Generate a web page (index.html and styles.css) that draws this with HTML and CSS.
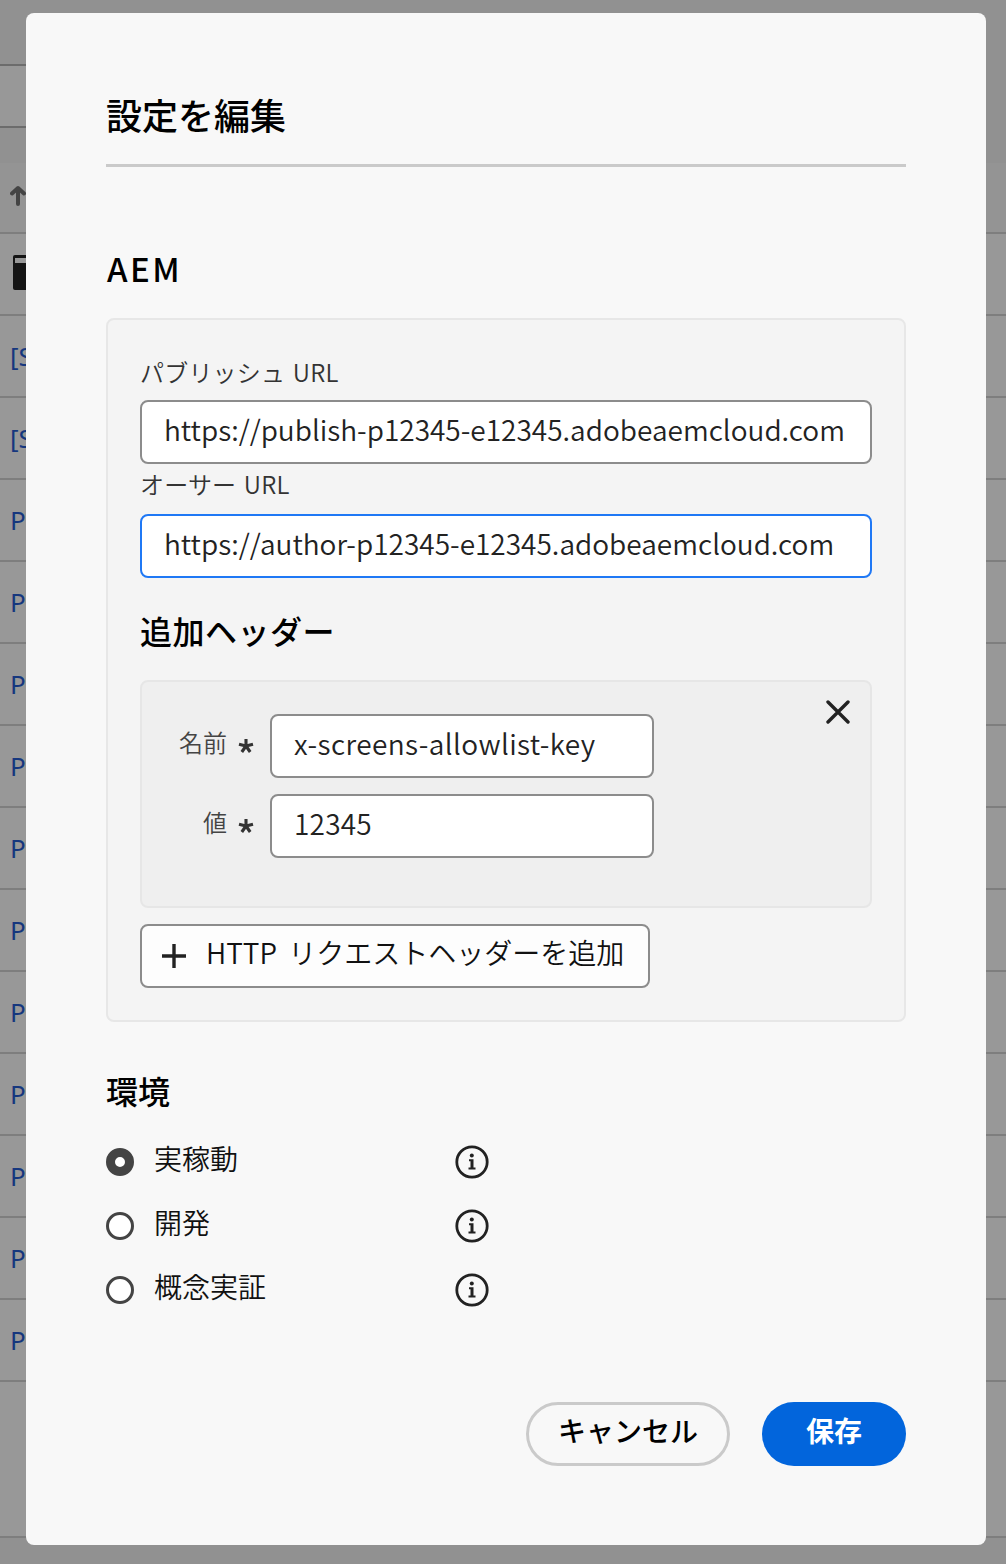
FILE: index.html
```html
<!DOCTYPE html>
<html lang="ja">
<head>
<meta charset="utf-8">
<title>設定を編集</title>
<link rel="stylesheet" href="styles.css">
</head>
<body>
<main class="page">
  <div class="topbar"></div>
  <div class="search"></div>
  <div class="gap"></div>
  <div class="sort">
    <svg width="20" height="22" viewBox="0 0 20 22"><path d="M8 19V4M2 8.500L8 3l6 5.500" fill="none" stroke="#444" stroke-width="4" stroke-linecap="round" stroke-linejoin="round"/></svg>
  </div>
  <div class="row"><span class="thumb"></span></div>
  <div class="row">[S</div>
  <div class="row">[S</div>
  <div class="row">P</div>
  <div class="row">P</div>
  <div class="row">P</div>
  <div class="row">P</div>
  <div class="row">P</div>
  <div class="row">P</div>
  <div class="row">P</div>
  <div class="row">P</div>
  <div class="row">P</div>
  <div class="row">P</div>
  <div class="row">P</div>
  <div class="rest"></div>
</main>
<div class="overlay">
  <form class="dialog">
    <h1 class="title">設定を編集</h1>
    <h2 class="heading heading-aem">AEM</h2>
    <section class="panel">
      <label class="label">パブリッシュ URL</label>
      <div class="input url">https://publish-p12345-e12345.adobeaemcloud.com</div>
      <label class="label label-second">オーサー URL</label>
      <div class="input url focused">https://author-p12345-e12345.adobeaemcloud.com</div>
      <h3 class="heading heading-headers">追加ヘッダー</h3>
      <div class="header-card">
        <div class="fields">
          <div class="field">
            <label class="side-label">名前</label>
            <svg class="star" width="18" height="18" viewBox="0 0 18 18"><path d="M9 9V2M9 9l7-1.800M9 9l4.200 6M9 9l-4.200 6M9 9L2 7.200"/></svg>
            <div class="input">x-screens-allowlist-key</div>
          </div>
          <div class="field">
            <label class="side-label">値</label>
            <svg class="star" width="18" height="18" viewBox="0 0 18 18"><path d="M9 9V2M9 9l7-1.800M9 9l4.200 6M9 9l-4.200 6M9 9L2 7.200"/></svg>
            <div class="input value">12345</div>
          </div>
        </div>
        <svg class="close" width="24" height="24" viewBox="0 0 24 24"><path d="M2 2l20 20M22 2L2 22"/></svg>
      </div>
      <div class="add">
        <svg class="plus" width="24" height="24" viewBox="0 0 24 24"><path d="M12 0v24M0 12h24"/></svg>
        <span>HTTP リクエストヘッダーを追加</span>
      </div>
    </section>
    <h2 class="heading heading-env">環境</h2>
    <div class="option">
      <i class="radio checked"></i><span class="option-name">実稼動</span>
      <svg class="info" width="34" height="34" viewBox="0 0 34 34"><circle cx="17" cy="17" r="15.200"/><path class="stem" d="M14 14.200h4.500v8.300h2v2h-7v-2h2v-6.300H14z"/><circle class="dot" cx="16.800" cy="10.400" r="2"/></svg>
    </div>
    <div class="option">
      <i class="radio"></i><span class="option-name">開発</span>
      <svg class="info" width="34" height="34" viewBox="0 0 34 34"><circle cx="17" cy="17" r="15.200"/><path class="stem" d="M14 14.200h4.500v8.300h2v2h-7v-2h2v-6.300H14z"/><circle class="dot" cx="16.800" cy="10.400" r="2"/></svg>
    </div>
    <div class="option">
      <i class="radio"></i><span class="option-name">概念実証</span>
      <svg class="info" width="34" height="34" viewBox="0 0 34 34"><circle cx="17" cy="17" r="15.200"/><path class="stem" d="M14 14.200h4.500v8.300h2v2h-7v-2h2v-6.300H14z"/><circle class="dot" cx="16.800" cy="10.400" r="2"/></svg>
    </div>
    <div class="actions">
      <div class="button cancel">キャンセル</div>
      <div class="button save">保存</div>
    </div>
  </form>
</div>
</body>
</html>
```
FILE: styles.css
```css
* { box-sizing: border-box; }
html, body { margin: 0; height: 100%; overflow: hidden; }
body { font-family: "Noto Sans CJK JP", sans-serif; font-weight: 350; color: #111; background: #919191; }
.page { height: 1564px; display: flex; flex-direction: column; }
.topbar { height: 64px; background: #919191; }
.search { width: 500px; height: 64px; background: #989898; border: solid #6c6c6c; border-width: 2px 0; }
.gap { height: 35px; background: #919191; }
.sort { height: 71px; padding: 22px 0 0 10px; background: #949494; border-bottom: 2px solid #7e7e7e; }
.row { height: 82px; padding-left: 10px; background: #989898; border-bottom: 2px solid #7e7e7e; color: #16377e; font: 26px/80px "Noto Sans", sans-serif; }
.thumb { display: block; width: 40px; height: 35px; margin-top: 21px; margin-left: 3px; background: linear-gradient(#989898, #989898) 2px 3px / 100% 5px no-repeat #151515; border-radius: 2px; }
.rest { height: 156px; background: #989898; border-bottom: 2px solid #7e7e7e; }
.overlay { position: fixed; inset: 0; padding: 13px 20px 19px 26px; }
.dialog { width: 960px; height: 1532px; padding: 74px 80px 0; background: #f8f8f8; border-radius: 8px; }
.title { margin: 0; height: 80px; border-bottom: 3px solid #cacaca; font-size: 36px; line-height: 54px; font-weight: 500; color: #000; }
.heading { margin: 0; font-size: 32px; line-height: 48px; font-weight: 500; color: #000; }
.heading-aem { margin-top: 77px; padding-left: 1px; font-size: 33px; letter-spacing: 2.4px; }
.panel { height: 704px; margin-top: 26px; padding: 32px 32px 0; border: 2px solid #e7e7e7; border-radius: 8px; background: #f4f4f4; }
.label { display: block; height: 48px; font-size: 24px; line-height: 39px; letter-spacing: .2px; word-spacing: 2px; color: #333; }
.label-second { height: 50px; }
.input { height: 64px; padding-left: 22px; border: 2px solid #8c8c8c; border-radius: 8px; background: #fff; font-size: 28px; line-height: 54px; white-space: nowrap; letter-spacing: .4px; color: #222; }
.url { letter-spacing: 0; }
.value { letter-spacing: .2px; }
.focused { border-color: #1f78f5; }
.heading-headers { margin-top: 28px; letter-spacing: .5px; }
.header-card { display: flex; justify-content: space-between; height: 228px; margin-top: 26px; padding: 32px 20px 0 0; border: 2px solid #e6e6e6; border-radius: 8px; background: #efefef; }
.fields { display: flex; flex-direction: column; gap: 16px; }
.field { display: flex; align-items: center; }
.field .input { width: 384px; }
.side-label { width: 85px; text-align: right; font-size: 24px; line-height: 36px; margin-top: -8px; color: #444; }
.star { margin: 0 15px 0 10px; fill: none; stroke: #333; stroke-width: 3.1; }
.close { margin-top: -14px; fill: none; stroke: #222; stroke-width: 3.4; stroke-linecap: round; }
.add { display: flex; width: 510px; height: 64px; margin-top: 16px; padding-left: 20px; border: 2px solid #8c8c8c; border-radius: 8px; background: #fdfdfd; font-size: 28px; line-height: 53px; word-spacing: 5px; }
.plus { margin: 18px 20px 0 0; fill: none; stroke: #222; stroke-width: 3.4; }
.heading-env { margin-top: 44px; margin-bottom: 16px; }
.option { display: flex; align-items: center; height: 64px; }
.radio { width: 28px; height: 28px; border: 3px solid #444; border-radius: 50%; background: #fff; }
.checked { border-width: 9px; }
.option-name { width: 300px; margin-left: 20px; margin-top: -8px; font-size: 28px; line-height: 42px; }
.info { margin-left: 1px; fill: none; stroke: #222; stroke-width: 2.8; }
.info .dot, .info .stem { fill: #222; stroke: none; }
.actions { display: flex; justify-content: flex-end; gap: 32px; margin-top: 80px; }
.button { height: 64px; border-radius: 32px; font-size: 28px; line-height: 51px; font-weight: 500; text-align: center; color: #000; }
.cancel { width: 204px; border: 3px solid #cacaca; }
.save { width: 144px; padding-top: 3px; background: #0265dc; color: #fff; font-weight: 700; }
```
